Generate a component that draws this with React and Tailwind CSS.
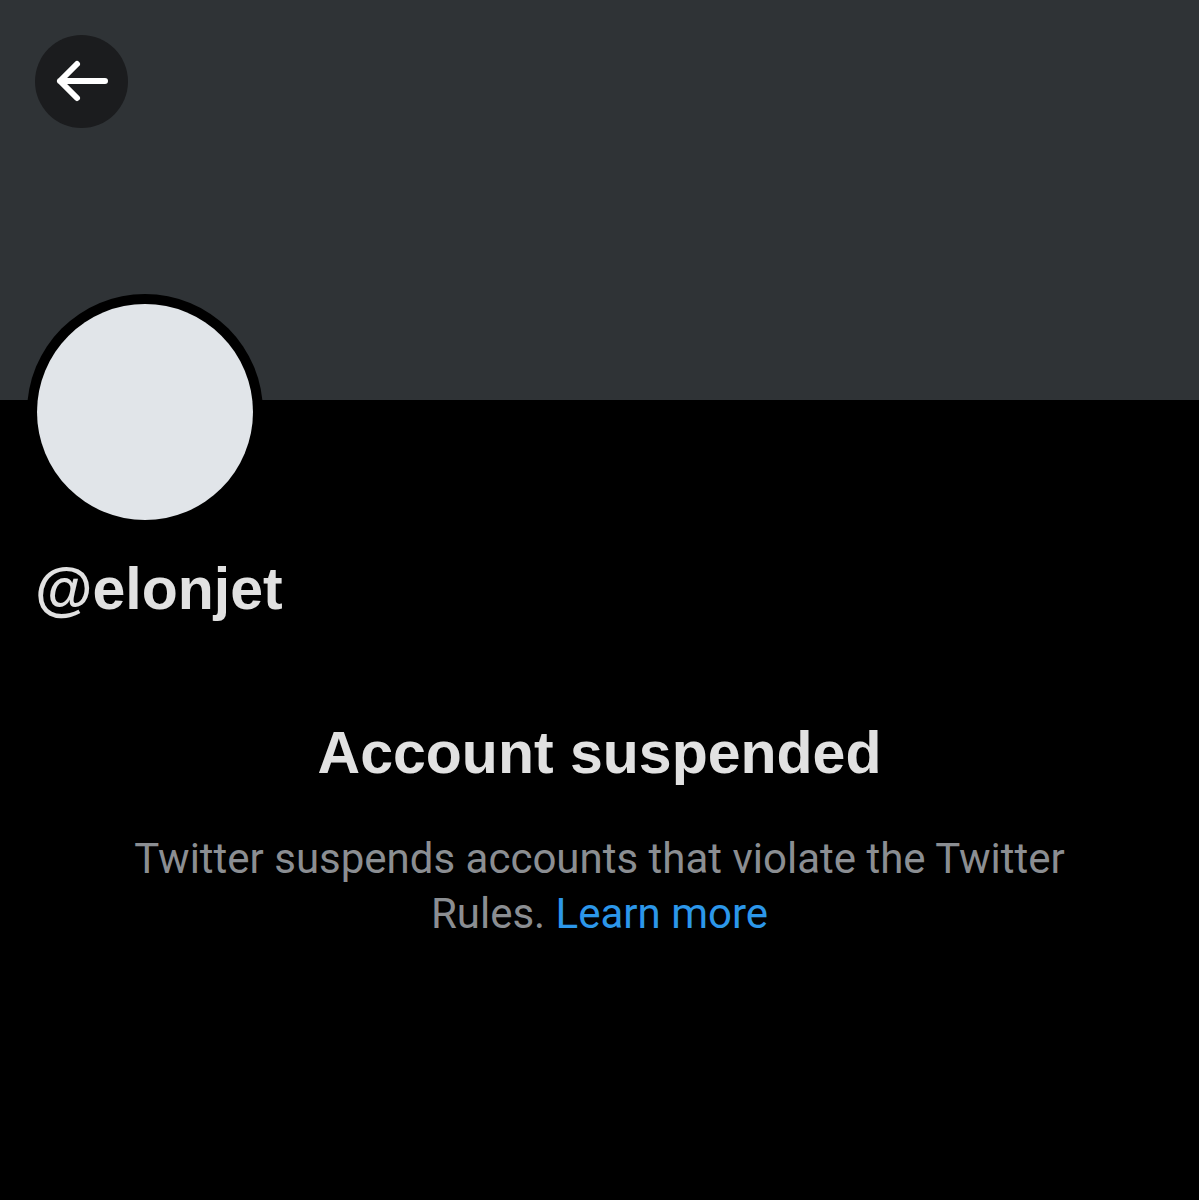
import React from "react";

export default function App() {
  return (
    <div className="w-[1199px] h-[1200px] bg-black overflow-hidden">
      <div className="h-[400px] bg-[#2f3336] pt-[35px] pl-[35px]">
        <div className="w-[93px] h-[93px] rounded-full bg-[#1b1c1e]">
          <svg width="93" height="93" viewBox="0 0 93 93" fill="none">
            <path d="M42 29 L25 46 L42 63 M25 46 H70" stroke="white" strokeWidth="6" strokeLinecap="round" strokeLinejoin="round" />
          </svg>
        </div>
      </div>
      <div className="-mt-[106px] ml-[27px] w-[236px] h-[236px] rounded-full bg-black p-[10px]">
        <div className="w-full h-full rounded-full bg-[#e1e5e9]" />
      </div>
      <div className="mt-[24px] ml-[35px] text-[59px] leading-[70px] font-bold text-[#e1e1e1] [font-family:'Liberation_Sans',Arial,sans-serif]">
        @elonjet
      </div>
      <div className="mt-[94px] text-center text-[59px] leading-[70px] font-bold text-[#e1e1e1] [font-family:'Liberation_Sans',Arial,sans-serif]">
        Account suspended
      </div>
      <div className="mt-[43px] mx-auto w-[960px] text-center text-[42px] leading-[55px] text-[#8b8e92] [font-family:Roboto,sans-serif]">
        <p>
          Twitter suspends accounts that violate the Twitter Rules.{" "}
          <a className="text-[#2c97ea]">Learn more</a>
        </p>
      </div>
    </div>
  );
}
